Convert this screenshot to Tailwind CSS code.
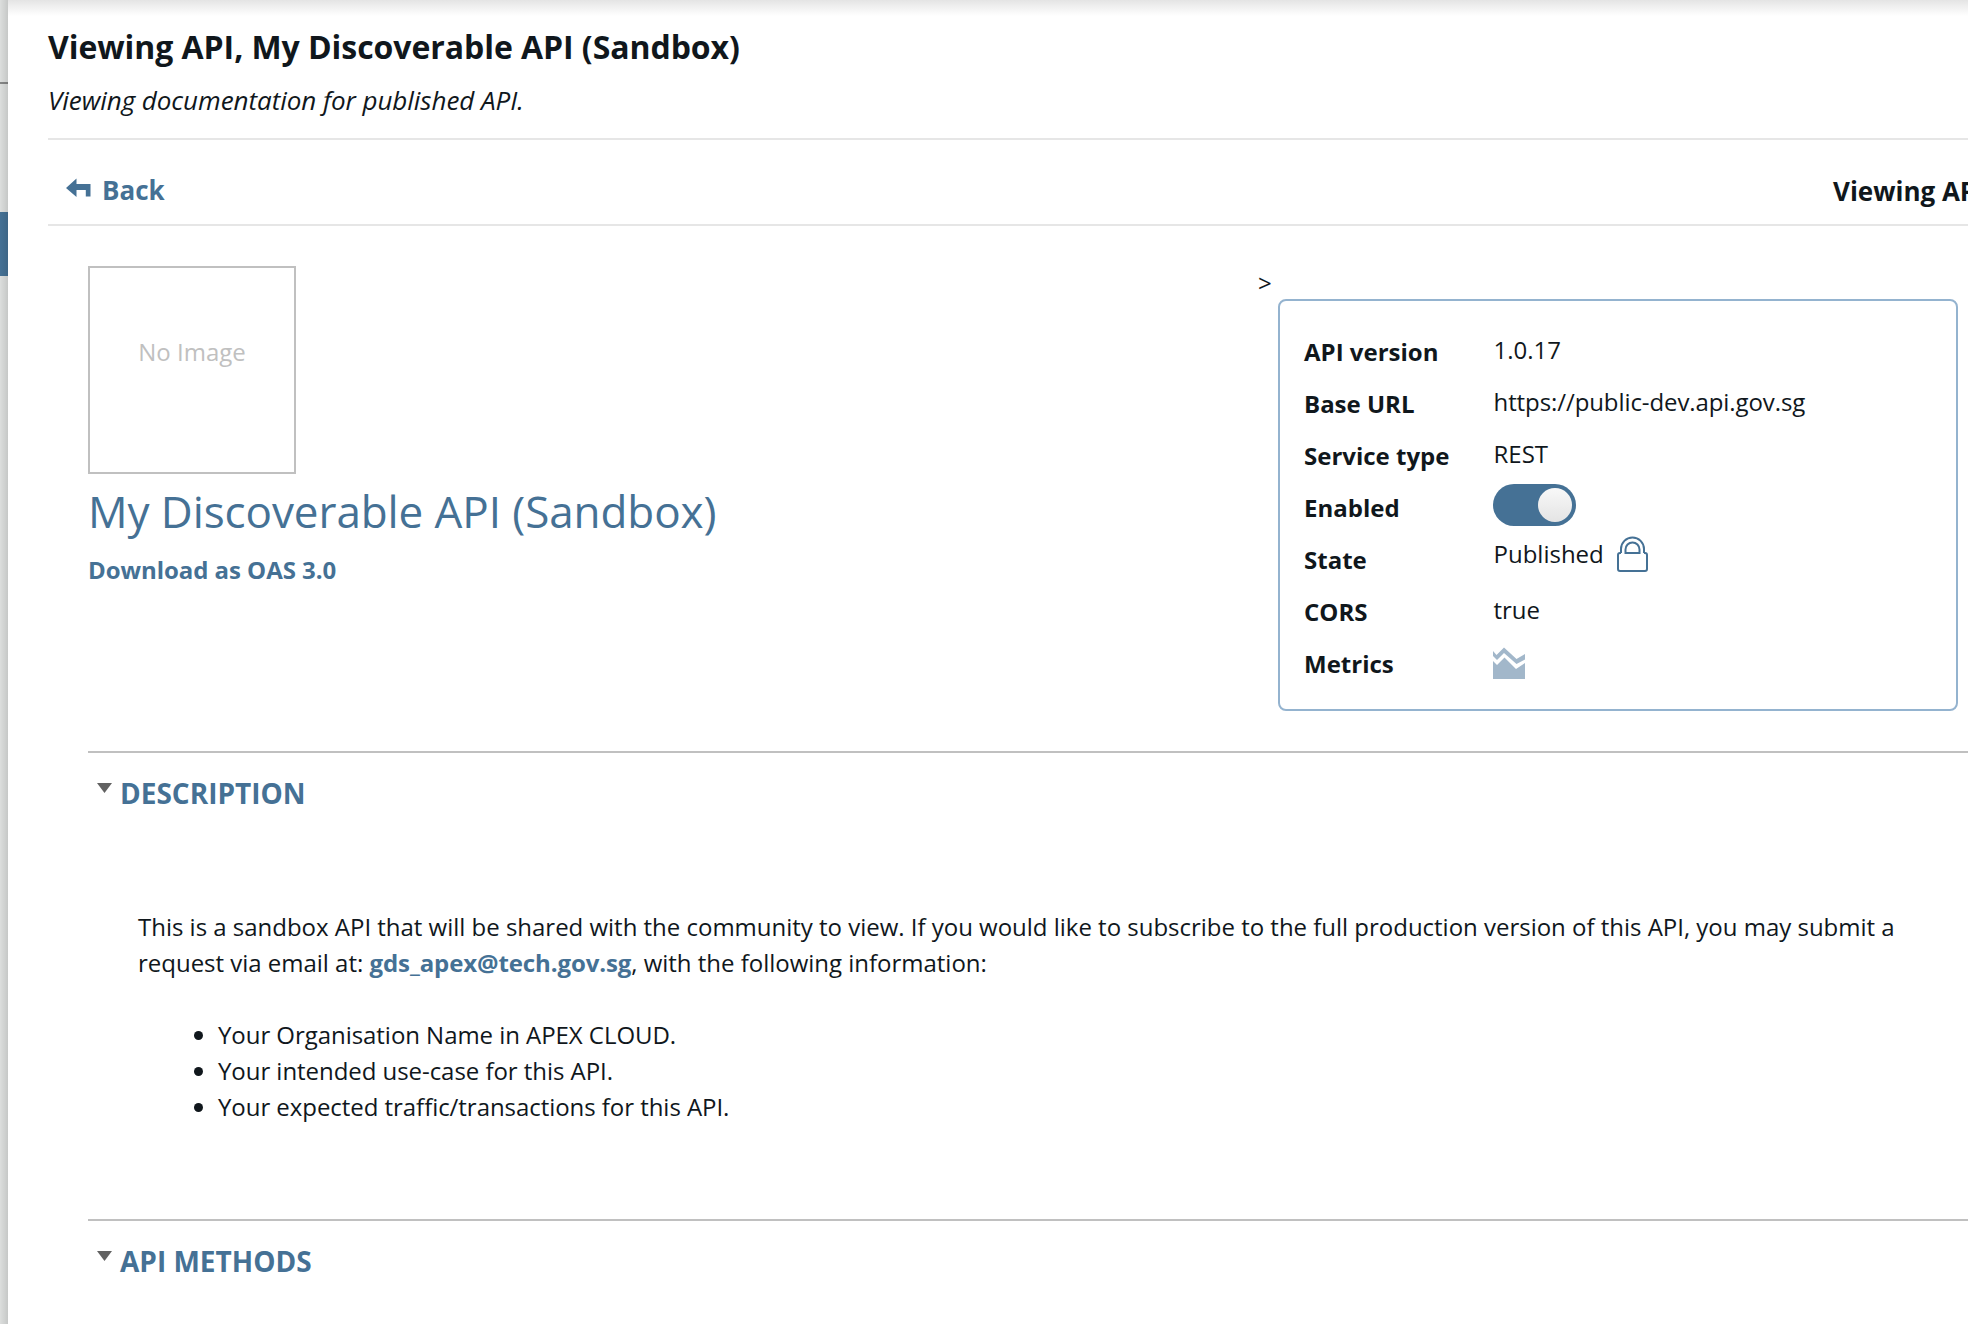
<!DOCTYPE html>
<html lang="en">
<head>
<meta charset="utf-8">
<title>Viewing API</title>
<script src="https://cdn.jsdelivr.net/npm/@tailwindcss/browser@4"></script>
</head>
<body class="w-[1968px] h-[1324px] overflow-hidden bg-white text-[#10171c] text-[24px] leading-[36px] font-['Open_Sans',sans-serif]">
<div class="flex h-full">
  <aside class="relative w-2 shrink-0 bg-[#dcdedd]">
    <div class="h-[82px]"></div>
    <div class="h-[2px] bg-[#858686]"></div>
    <div class="h-[128px]"></div>
    <div class="h-[64px] bg-[#457195]"></div>
    <div class="absolute inset-0 bg-linear-to-r from-black/0 to-black/10"></div>
  </aside>
  <main class="relative w-[1960px] shrink-0 pl-10 pt-[23px]">
    <div class="absolute left-0 top-0 w-full h-[16px] bg-linear-to-b from-[#e4e4e4] via-[#eeeeee] via-35% to-white"></div>
    <header class="border-b-2 border-[#e6e6e6] pb-[18px]">
      <h1 class="relative text-[32px] leading-[48px] font-bold whitespace-nowrap tracking-[-0.06px]">Viewing API, My Discoverable API (Sandbox)</h1>
      <p class="mt-[9px] text-[26px] leading-10 italic tracking-[-0.05px]">Viewing documentation for published API.</p>
    </header>
    <nav class="flex h-[86px] border-b-2 border-[#e6e6e6] pt-4 text-[26px] leading-[68px] font-bold">
      <a class="flex pl-[18px] text-[#457195]">
        <svg class="mt-[22px] mr-[11px]" width="25" height="20" viewBox="0 0 25 20" fill="#457195"><path d="M0 10 10.5 .5V6H24.5V18.5H19.8V12H10.5V19Z"/></svg>
        Back</a>
      <span class="ml-auto w-[135px] pt-px whitespace-nowrap">Viewing API</span>
    </nav>
    <div class="flex justify-between h-[527px] ml-10 pt-10 border-b-2 border-[#c0c0c0]">
      <section>
        <div class="size-[208px] border-2 border-[#c0c0c0] text-center leading-[167px] text-[#c0c0c0]">No Image</div>
        <h2 class="mt-[7px] text-[44px] leading-[60px] text-[#457195] tracking-[-0.08px]">My Discoverable API (Sandbox)</h2>
        <a class="block leading-[58px] font-bold text-[#457195] tracking-[-0.05px]">Download as OAS 3.0</a>
      </section>
      <section class="w-[710px]">
        <div class="h-[33px] leading-[34px]">&gt;</div>
        <dl class="ml-5 w-[680px] h-[412px] rounded-lg border-2 border-[#94b3cf] pt-[25px] pl-6 grid grid-cols-[189.5px_1fr] auto-rows-[52px] leading-[52px] content-start">
          <dt class="font-bold">API version</dt><dd class="-mt-[2px]">1.0.17</dd>
          <dt class="font-bold">Base URL</dt><dd class="-mt-[2px] tracking-[-0.09px]">https://public-dev.api.gov.sg</dd>
          <dt class="font-bold">Service type</dt><dd class="-mt-[2px]">REST</dd>
          <dt class="font-bold">Enabled</dt>
          <dd class="pt-[2px] -ml-[0.5px]"><div class="flex justify-end w-[83px] h-[42px] p-1 rounded-full bg-[#457195]"><div class="size-[34px] rounded-full bg-linear-to-b from-[#f8f8f8] to-[#e4e4e4]"></div></div></dd>
          <dt class="font-bold">State</dt>
          <dd class="flex -mt-[6px]">Published
            <svg class="mt-[8px] ml-[13px]" width="32" height="37" viewBox="0 0 32 37" fill="none" stroke="#457195" stroke-width="2"><path d="M4 17V13a11.5 11.5 0 0 1 23 0v4M8.5 17V13.5a7 7 0 0 1 14 0V17Z"/><path d="M4 17H3a2 2 0 0 0-2 2V33a2 2 0 0 0 2 2H28a2 2 0 0 0 2-2V19a2 2 0 0 0-2-2H27"/></svg>
          </dd>
          <dt class="font-bold">CORS</dt><dd class="-mt-[2px]">true</dd>
          <dt class="font-bold">Metrics</dt>
          <dd class="pt-[9px] -ml-[0.5px]"><svg width="32" height="32" viewBox="0 0 32 32" fill="#a2b7ca"><path d="M0 4 3.5 8 11 .5 23.5 12 32 7V12.500L23.500 17 11 6 4 13 0 9Z"/><path d="M0 14 4 18 11.500 10.500 23 22 32 16V32H0Z"/></svg></dd>
        </dl>
      </section>
    </div>
    <section class="ml-10 h-[468px] pt-4 border-b-2 border-[#c0c0c0]">
      <h3 class="flex pl-[9px] text-[28px] leading-[48px] font-bold text-[#457195]">
        <svg class="mt-[13px] mr-[7px]" width="16" height="12" viewBox="0 0 16 12"><path fill="#626262" d="M0 1H15L7.500 11Z"/></svg>DESCRIPTION</h3>
      <div class="mt-[92px] ml-[50px]">
        <p class="w-[1790px] tracking-[-0.015px]">This is a sandbox API that will be shared with the community to view. If you would like to subscribe to the full production version of this API, you may submit a<br>request via email at: <a class="font-bold text-[#457195] tracking-[-0.1px]">gds_apex@tech.gov.sg</a>, with the following information:</p>
        <ul class="mt-9 pl-20 list-disc tracking-[-0.05px]">
          <li>Your Organisation Name in APEX CLOUD.</li>
          <li>Your intended use-case for this API.</li>
          <li>Your expected traffic/transactions for this API.</li>
        </ul>
      </div>
    </section>
    <section class="ml-10 pt-4">
      <h3 class="flex pl-[9px] text-[28px] leading-[48px] font-bold text-[#457195]">
        <svg class="mt-[13px] mr-[7px]" width="16" height="12" viewBox="0 0 16 12"><path fill="#626262" d="M0 1H15L7.500 11Z"/></svg>API METHODS</h3>
    </section>
  </main>
</div>
</body>
</html>
